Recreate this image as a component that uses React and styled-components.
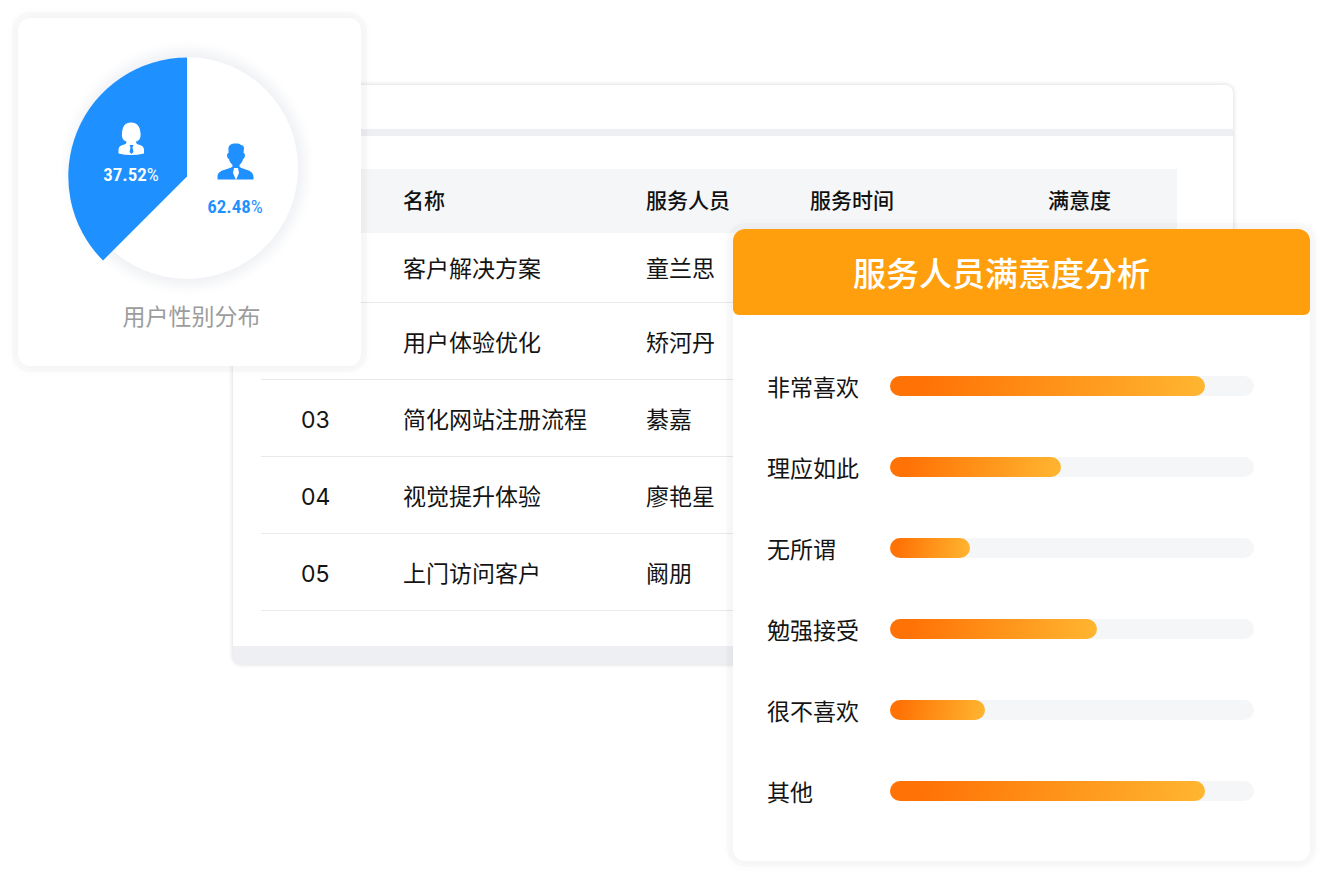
import styled, { createGlobalStyle } from "styled-components";

const GlobalStyle = createGlobalStyle`
  * {
    box-sizing: border-box;
  }
  body {
    margin: 0;
    background-color: #fff;
    color: #141414;
    font-family: "Noto Sans CJK SC", sans-serif;
  }
`;

// the side cards share grid cells with the table panel, so they overlap it
const Stage = styled.main`
  display: grid;
  grid-template-columns: 215px 128px minmax(372px, 1fr) 500px 77px;
  grid-template-rows: 67px 144px auto;
  align-items: start;
  padding: 18px;
`;

const Card = styled.section`
  z-index: 1;
  background-color: #fff;
  border-radius: 12px;
  box-shadow: 0 0 0 6px rgb(0 0 0 / 0.015), 0 0 12px 4px rgb(0 0 0 / 0.03);
`;

const GenderCard = styled(Card)`
  grid-column: 1 / 3;
  grid-row: 1 / 4;
  display: flex;
  flex-direction: column;
  align-items: center;
  padding: 20px 0 34px;
`;

const Pie = styled.svg`
  display: block;
  width: 270px;
  height: 260px;
`;

const Percent = styled.text`
  font-family: "Roboto Condensed", "Liberation Sans Narrow", sans-serif;
  font-size: 19px;
  font-weight: 600;
  text-anchor: middle;
  fill: ${(props) => props.$color};

  & tspan {
    font-weight: 400;
  }
`;

const Caption = styled.h2`
  margin: 0;
  padding-left: 4px;
  color: #9c9c9c;
  font-size: 23px;
  font-weight: 400;
  line-height: 34px;
`;

const Panel = styled.section`
  grid-column: 2 / 5;
  grid-row: 2 / 4;
  background-color: #fff;
  border-radius: 8px;
  border-bottom: 18px solid #edeff3;
  box-shadow: 0 0 4px 1px rgb(0 0 0 / 0.12);
`;

const PanelBar = styled.header`
  height: 51px;
  border-bottom: 7px solid #edeff3;
`;

const PanelBody = styled.div`
  padding: 33px 56px 35px 28px;
`;

const Table = styled.table`
  width: 100%;
  table-layout: fixed;
  border-collapse: collapse;
`;

const Col = styled.col`
  width: ${(props) => props.$width};
`;

const Th = styled.th`
  height: 64px;
  padding: 0 0 4px;
  background-color: #f5f6f8;
  color: #111;
  font-size: 21px;
  font-weight: 500;
  text-align: left;
`;

const Row = styled.tr`
  height: 77px;

  &:first-child {
    height: 69px;
  }
`;

const Td = styled.td`
  padding: 0;
  border-bottom: 1px solid #e9e9ea;
  font-size: 23px;
  white-space: nowrap;
`;

const IndexTd = styled(Td)`
  padding: 4px 0 0 40px;
  font-family: Inter, sans-serif;
`;

const AnalysisCard = styled(Card)`
  grid-column: 4 / 6;
  grid-row: 3;
  padding-bottom: 30px;
`;

const AnalysisTitle = styled.h2`
  margin: 0 0 30px;
  padding: 18px 40px 18px 0;
  background-color: #ff9f0e;
  border-radius: 12px 12px 6px 6px;
  color: #fff;
  font-size: 33px;
  font-weight: 500;
  line-height: 50px;
  text-align: center;
`;

const Rating = styled.div`
  display: flex;
  align-items: center;
  height: 81px;
  padding: 0 56px 0 34px;
`;

const RatingLabel = styled.span`
  width: 123px;
  font-size: 23px;
`;

const Track = styled.div`
  flex-grow: 1;
  height: 20px;
  background-color: #f5f6f8;
  border-radius: 10px;
`;

const Fill = styled.div`
  height: 100%;
  border-radius: 10px;
  background-image: linear-gradient(100deg, #ff7205 10%, #ffb631);
`;

const rows = [
  { id: "01", name: "客户解决方案", staff: "童兰思" },
  { id: "02", name: "用户体验优化", staff: "矫河丹" },
  { id: "03", name: "简化网站注册流程", staff: "綦嘉" },
  { id: "04", name: "视觉提升体验", staff: "廖艳星" },
  { id: "05", name: "上门访问客户", staff: "阚朋" },
];

const ratings = [
  { label: "非常喜欢", value: 86.5 },
  { label: "理应如此", value: 47 },
  { label: "无所谓", value: 22 },
  { label: "勉强接受", value: 57 },
  { label: "很不喜欢", value: 26 },
  { label: "其他", value: 86.5 },
];

function GenderPie() {
  return (
    <Pie viewBox="0 0 270 260" role="img" aria-label="用户性别分布">
      <defs>
        <filter id="pieShadow" x="-20%" y="-20%" width="140%" height="140%">
          <feGaussianBlur stdDeviation="6" />
        </filter>
      </defs>
      <circle cx="132" cy="130" r="118" fill="#eff1f4" filter="url(#pieShadow)" />
      <circle cx="132" cy="130" r="111" fill="#fff" />
      <path d="M132 138.500V19.500A119 119 0 0 0 48 222.500Z" fill="#1e90ff" />
      {/* woman */}
      <path
        d="M76 84.500C70 84.500 67.500 88.500 67 95C66.500 100 68 102.500 71.500 103.500L71 105.500C69 107.500 63.500 106.500 63.500 112V115.500Q76 118.500 89 115.500V112C89 106.500 83.500 107.500 81.500 105.500L81 103.500C84.500 102.500 86 100 85.500 95C85 88.500 82 84.500 76 84.500Z"
        fill="#fff"
      />
      <path d="M74.500 107H78.500L77.500 109.500L78.500 114L76.500 116L74.500 114L75.500 109.500Z" fill="#1e90ff" />
      {/* man */}
      <path
        d="M181 105.500C176 105.500 173 107 173.500 112V115C171.500 115 171.500 120 174 121C174.500 124 176 125.500 177.500 127V128.500C174 132 162.500 131 162.500 139V141.500H198.500V139C198.500 131 187 132 184.500 128.500V127C186 125.500 187.500 124 188 121C190.500 120 190.500 115 188.500 115L189 110C189 108 187.500 107 186 107C185 105.500 183 105.500 181 105.500Z"
        fill="#1e90ff"
      />
      <path d="M179 130H183L184 135L181 142L178 135Z" fill="#fff" />
      <Percent x="76" y="143" $color="#fff">
        37.52<tspan>%</tspan>
      </Percent>
      <Percent x="180" y="175" $color="#1e90ff">
        62.48<tspan>%</tspan>
      </Percent>
    </Pie>
  );
}

function App() {
  return (
    <>
      <GlobalStyle />
      <Stage>
        <GenderCard>
          <GenderPie />
          <Caption>用户性别分布</Caption>
        </GenderCard>

        <Panel>
          <PanelBar />
          <PanelBody>
            <Table>
              <colgroup>
                <Col $width="142px" />
                <Col $width="243px" />
                <Col $width="164px" />
                <Col $width="238px" />
                <Col />
              </colgroup>
              <thead>
                <tr>
                  <Th />
                  <Th>名称</Th>
                  <Th>服务人员</Th>
                  <Th>服务时间</Th>
                  <Th>满意度</Th>
                </tr>
              </thead>
              <tbody>
                {rows.map((row) => (
                  <Row key={row.id}>
                    <IndexTd>{row.id}</IndexTd>
                    <Td>{row.name}</Td>
                    <Td>{row.staff}</Td>
                    <Td />
                    <Td />
                  </Row>
                ))}
              </tbody>
            </Table>
          </PanelBody>
        </Panel>

        <AnalysisCard>
          <AnalysisTitle>服务人员满意度分析</AnalysisTitle>
          {ratings.map((rating) => (
            <Rating key={rating.label}>
              <RatingLabel>{rating.label}</RatingLabel>
              <Track>
                <Fill style={{ width: `${rating.value}%` }} />
              </Track>
            </Rating>
          ))}
        </AnalysisCard>
      </Stage>
    </>
  );
}

export default App;
